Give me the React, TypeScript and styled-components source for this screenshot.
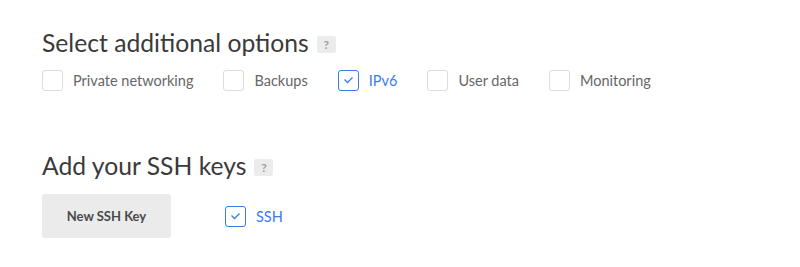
import React from "react";
import styled, { createGlobalStyle } from "styled-components";

const Global = createGlobalStyle`
  html, body { margin: 0; padding: 0; background: #fff; }
  body { font-family: Lato, "Open Sans", sans-serif; -webkit-font-smoothing: antialiased; }
`;

const Page = styled.div`
  padding: 28px 42px 0 42px;
  display: flex;
  flex-direction: column;
`;

const Section = styled.section<{ $gap: number }>`
  display: flex;
  flex-direction: column;
  margin-bottom: ${(p) => p.$gap}px;
`;

const Heading = styled.h2`
  display: flex;
  align-items: center;
  gap: 8px;
  margin: 0;
  font-size: 24.7px;
  font-weight: 400;
  color: #3a3a3a;
  line-height: 30px;
  height: 30px;
`;

const Help = styled.span`
  display: inline-flex;
  align-items: center;
  justify-content: center;
  width: 19px;
  height: 17px;
  border-radius: 2px;
  background: #ececec;
  color: #a0a0a0;
  font-size: 12px;
  font-weight: 700;
  line-height: 1;
  margin-top: 3px;
`;

const Options = styled.div`
  display: flex;
  align-items: center;
  margin-top: 11px;
`;

const Option = styled.label<{ $checked?: boolean }>`
  display: flex;
  align-items: center;
  gap: 10px;
  margin-right: 30px;
  font-size: 14.5px;
  color: ${(p) => (p.$checked ? "#3a7bf0" : "#666")};
  cursor: pointer;
  height: 22px;
`;

const Box = styled.span<{ $checked?: boolean }>`
  box-sizing: border-box;
  width: 21px;
  height: 21px;
  border-radius: 3px;
  border: 1px solid ${(p) => (p.$checked ? "#3a7bf0" : "#dcdcdc")};
  background: #fff;
  display: flex;
  align-items: center;
  justify-content: center;
`;

const Row = styled.div`
  display: flex;
  align-items: center;
  margin-top: 13px;
`;

const Button = styled.button`
  width: 129px;
  height: 44px;
  border: none;
  border-radius: 3px;
  background: #ebebeb;
  color: #4a4a4a;
  font-family: inherit;
  font-size: 13px;
  font-weight: 700;
  margin-right: 54px;
`;

const Check = () => (
  <svg width="11" height="8" viewBox="0 0 11 8" fill="none">
    <path d="M1.5 3.5 L4.5 6.5 L9.5 1.5" stroke="#3a7bf0" strokeWidth="1.3" />
  </svg>
);

const Checkbox = ({ label, checked }: { label: string; checked?: boolean }) => (
  <Option $checked={checked}>
    <Box $checked={checked}>{checked && <Check />}</Box>
    {label}
  </Option>
);

export default function App() {
  return (
    <>
      <Global />
      <Page>
        <Section $gap={60}>
          <Heading>
            Select additional options <Help>?</Help>
          </Heading>
          <Options>
            <Checkbox label="Private networking" />
            <Checkbox label="Backups" />
            <Checkbox label="IPv6" checked />
            <Checkbox label="User data" />
            <Checkbox label="Monitoring" />
          </Options>
        </Section>
        <Section $gap={0}>
          <Heading>
            Add your SSH keys <Help>?</Help>
          </Heading>
          <Row>
            <Button>New SSH Key</Button>
            <Checkbox label="SSH" checked />
          </Row>
        </Section>
      </Page>
    </>
  );
}
